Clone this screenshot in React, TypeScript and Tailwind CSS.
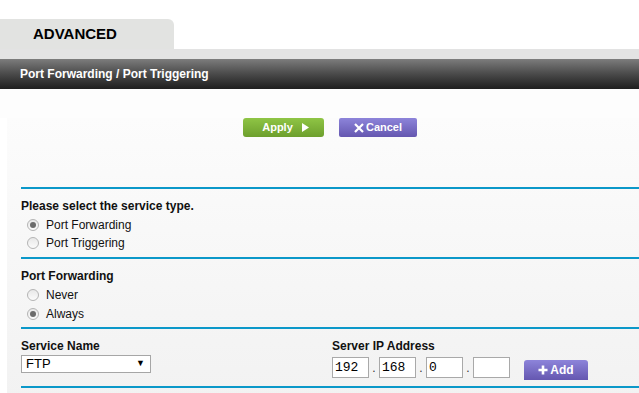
import { useState } from 'react'

function Radio({ checked, label, onClick }: { checked: boolean; label: string; onClick: () => void }) {
  return (
    <div className="flex items-center h-[18px] pl-[6px] cursor-pointer" onClick={onClick}>
      <span className="w-[12px] h-[12px] rounded-full border border-[#b4b4b4] bg-gradient-to-b from-[#e8e8e8] to-[#fbfbfb] flex items-center justify-center">
        {checked && <span className="w-[6px] h-[6px] rounded-full bg-[#6b6b6b]" />}
      </span>
      <span className="ml-[7px] text-[12px] text-[#111]">{label}</span>
    </div>
  )
}

function Line() {
  return <div className="h-[2px] bg-[#0b98c9]" />
}

export default function App() {
  const [service, setService] = useState('fwd')
  const [when, setWhen] = useState('always')

  return (
    <div className="w-[639px] h-[393px] overflow-hidden bg-white" style={{ fontFamily: '"Liberation Sans", Arial, sans-serif' }}>
      <div className="h-[19px]" />
      <div className="w-[174px] h-[30px] bg-[#e2e3e1] rounded-tr-[6px] flex items-center pl-[33px]">
        <span className="text-[15px] font-bold text-black">ADVANCED</span>
      </div>
      <div className="h-[10px] bg-[#e3e3e3]" />
      <div className="h-[30px] bg-gradient-to-b from-[#7d7d7d] via-[#4a4a4a] to-[#1f1f1f] flex items-center pl-[20px]">
        <span className="text-[12px] font-bold text-white">Port Forwarding / Port Triggering</span>
      </div>

      <div className="bg-[#fdfdfd] h-[29px]" />
      <div className="ml-[7px] bg-gradient-to-b from-[#fcfcfc] to-[#f2f2f2] pl-[14px]">
        <div className="flex items-center h-[19px] pl-[222px] gap-[15px]">
          <button className="w-[81px] h-[19px] rounded-[3px] bg-gradient-to-b from-[#8fc545] to-[#6d9f2d] flex items-center justify-center gap-[9px] pl-[4px] text-white text-[11px] font-bold">
            <span>Apply</span>
            <svg width="7" height="9" viewBox="0 0 7 9"><path d="M0 0 L7 4.5 L0 9 Z" fill="#fff" /></svg>
          </button>
          <button className="w-[78px] h-[19px] rounded-[2px] bg-gradient-to-b from-[#8d84da] to-[#6557b0] flex items-center justify-center gap-[2px] text-white text-[11px] font-bold">
            <svg width="10" height="10" viewBox="0 0 10 10"><path d="M1 1 L9 9 M9 1 L1 9" stroke="#fff" strokeWidth="2.2" /></svg>
            <span>Cancel</span>
          </button>
        </div>
        <div className="h-[50px]" />

        <Line />
        <div className="h-[68px] pt-[10px]">
          <div className="text-[12px] font-bold text-[#111] leading-[14px]">Please select the service type.</div>
          <div className="mt-[3px]">
            <Radio checked={service === 'fwd'} label="Port Forwarding" onClick={() => setService('fwd')} />
            <Radio checked={service === 'trig'} label="Port Triggering" onClick={() => setService('trig')} />
          </div>
        </div>

        <Line />
        <div className="h-[68px] pt-[10px]">
          <div className="text-[12px] font-bold text-[#111] leading-[14px]">Port Forwarding</div>
          <div className="mt-[3px] flex flex-col gap-[1px]">
            <Radio checked={when === 'never'} label="Never" onClick={() => setWhen('never')} />
            <Radio checked={when === 'always'} label="Always" onClick={() => setWhen('always')} />
          </div>
        </div>

        <Line />
        <div className="h-[57px] flex pt-[10px]">
          <div className="w-[311px]">
            <div className="text-[12px] font-bold text-[#111] leading-[14px]">Service Name</div>
            <div className="mt-[2px] w-[130px] h-[18px] border border-[#a6a6a6] bg-white flex items-center justify-between pl-[4px] pr-[5px]">
              <span className="text-[13px] text-black">FTP</span>
              <span className="text-[9px] text-black">▼</span>
            </div>
          </div>
          <div>
            <div className="text-[12px] font-bold text-[#111] leading-[14px]">Server IP Address</div>
            <div className="flex items-center mt-[2px]">
              {['192', '168', '0', ''].map((v, i) => (
                <div key={i} className="flex items-center">
                  <div className="w-[37px] h-[21px] border border-[#a9a9a9] bg-white flex items-center pl-[2px] text-[13px] text-black" style={{ fontFamily: '"Liberation Mono", "Courier New", monospace' }}>
                    {v}
                  </div>
                  {i < 3 && <span className="w-[10px] text-center text-[12px] text-[#333]">.</span>}
                </div>
              ))}
              <button className="ml-[14px] mt-[5px] w-[64px] h-[20px] rounded-t-[3px] bg-gradient-to-b from-[#8d84da] to-[#6557b0] flex items-center justify-center gap-[2px] text-white text-[12px] font-bold">
                <svg width="10" height="10" viewBox="0 0 10 10"><path d="M5 0.5 V9.5 M0.5 5 H9.5" stroke="#fff" strokeWidth="2.6" /></svg>
                <span>Add</span>
              </button>
            </div>
          </div>
        </div>
        <Line />
        <div className="h-[10px]" />
      </div>
    </div>
  )
}
